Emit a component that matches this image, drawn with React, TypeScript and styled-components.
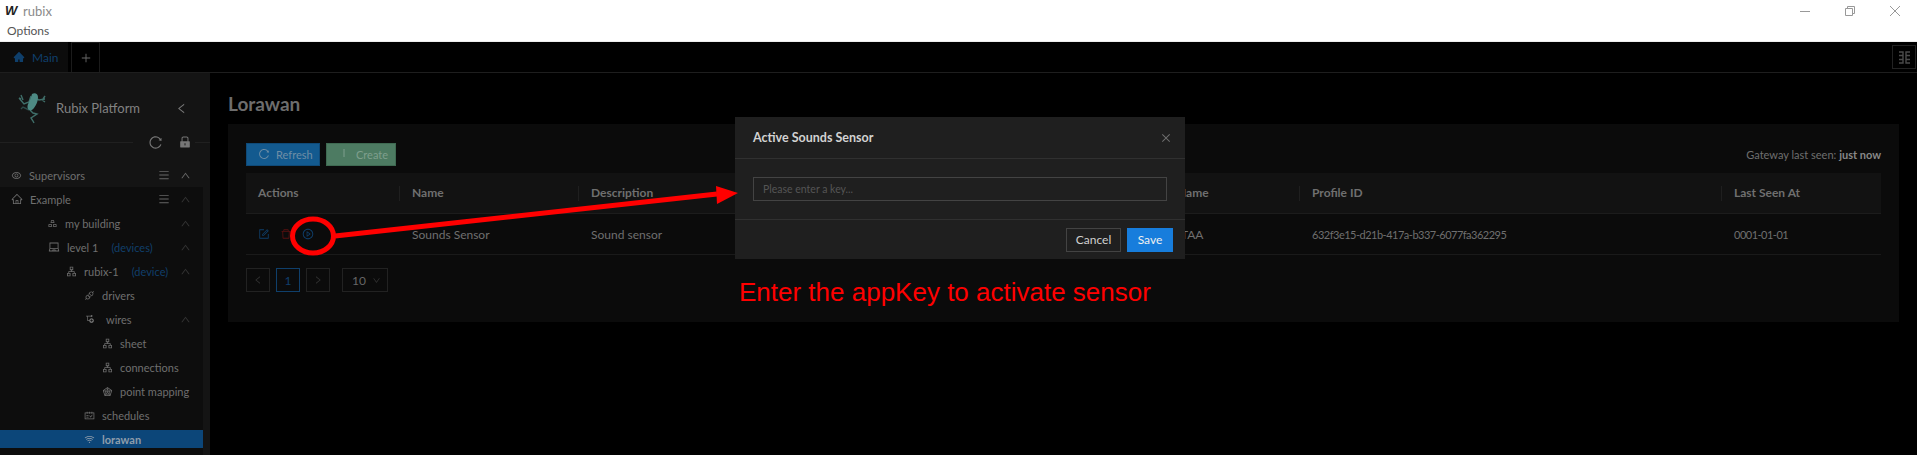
import styled, { createGlobalStyle } from 'styled-components';
import {
  AiFillHome,
  AiFillLock,
  AiOutlineApartment,
  AiOutlineApi,
  AiOutlineClose,
  AiOutlineDelete,
  AiOutlineDown,
  AiOutlineEye,
  AiOutlineForm,
  AiOutlineGold,
  AiOutlineHome,
  AiOutlineLaptop,
  AiOutlineLeft,
  AiOutlineMenu,
  AiOutlinePlayCircle,
  AiOutlinePlus,
  AiOutlineRadarChart,
  AiOutlineReload,
  AiOutlineRight,
  AiOutlineSchedule,
  AiOutlineSisternode,
  AiOutlineUp,
  AiOutlineWifi,
} from 'react-icons/ai';
import type { ReactNode } from 'react';

const Global = createGlobalStyle`
  html, body {
    margin: 0;
    padding: 0;
    height: 100%;
    overflow: hidden;
    background: #000;
    font-family: Lato, "Open Sans", sans-serif;
  }
  * { box-sizing: border-box; }
`;

const Page = styled.div`
  position: relative;
  width: 1917px;
  height: 455px;
  overflow: hidden;
  display: flex;
  flex-direction: column;
`;

const TitleBar = styled.div`
  height: 42px;
  flex: none;
  background: #fff;
  border-bottom: 1px solid #eeeeee;
  display: flex;
  flex-direction: column;
`;

const TitleRow = styled.div`
  height: 21px;
  display: flex;
  align-items: center;
  padding-left: 5px;
`;

const AppBadge = styled.span`
  width: 11px;
  font: italic 700 13px 'Liberation Sans', sans-serif;
  color: #222;
`;

const AppName = styled.span`
  margin-left: 7px;
  font-size: 13px;
  color: #8a8a8a;
`;

const WindowControls = styled.div`
  margin-left: auto;
  display: flex;
  gap: 35px;
  padding-right: 17px;
  align-items: center;
`;

const MenuRow = styled.div`
  height: 20px;
  padding-left: 7px;
  font-size: 12px;
  line-height: 20px;
  color: #555;
`;

const TabBar = styled.div`
  height: 31px;
  flex: none;
  display: flex;
  background: #000;
  border-bottom: 1px solid #1e1e1e;
`;

const MainTab = styled.div`
  width: 68px;
  display: flex;
  align-items: center;
  gap: 7px;
  padding-left: 13px;
  background: #0c0c0c;
  color: #0f3f6b;
  font-size: 12px;
`;

const PlusTab = styled.div`
  width: 29px;
  margin-left: 3px;
  display: flex;
  align-items: center;
  justify-content: center;
  border: 1px solid #1b1b1b;
  border-bottom: none;
  color: #6a6a6a;
  font-size: 12px;
`;

const LayoutButton = styled.div`
  margin: 3px 1px 3px auto;
  width: 24px;
  display: flex;
  align-items: center;
  justify-content: center;
  border: 1px solid #222;
`;

const Body = styled.div`
  flex: 1;
  display: flex;
  min-height: 0;
`;

const Sidebar = styled.aside`
  width: 210px;
  flex: none;
  background: #141414;
  display: flex;
  flex-direction: column;
`;

const Brand = styled.div`
  height: 58px;
  display: flex;
  align-items: center;
  padding: 12px 22px 0 18px;
  color: #828282;
  font-size: 13px;
`;

const BrandName = styled.span`
  margin-left: 10px;
  flex: 1;
`;

const ToolRow = styled.div`
  height: 24px;
  display: flex;
  align-items: center;
  gap: 15px;
  color: #777;
  margin: -1px 0 9px;
  padding-right: 18px;
`;

const ToolRule = styled.span`
  height: 1px;
  background: #202020;
  flex: 1;
`;

const RightRule = styled.span`
  width: 15px;
  height: 1px;
  margin: 0 -18px 0 -12px;
  background: #202020;
`;

const Tree = styled.div`
  flex: 1;
  width: 203px;
  display: flex;
  flex-direction: column;
  background: #0d0d0d;
`;

const TreeRow = styled.div<{ $indent: number; $selected?: boolean; $top?: boolean }>`
  height: ${(p) => (p.$selected ? 18 : 24)}px;
  margin: ${(p) => (p.$selected ? '3px 0' : '0')};
  flex: none;
  display: flex;
  align-items: center;
  gap: 7px;
  padding-left: ${(p) => p.$indent}px;
  padding-right: 12px;
  font-size: 11px;
  font-weight: ${(p) => (p.$selected ? 700 : 400)};
  color: ${(p) => (p.$selected ? '#8f9dab' : '#6f6f6f')};
  background: ${(p) => (p.$selected ? '#0c4679' : p.$top ? '#141414' : 'transparent')};
  & > svg { flex: none; }
`;

const TreeLabel = styled.span<{ $gap?: number }>`
  margin-left: ${(p) => p.$gap ?? 0}px;
  white-space: pre;
`;

const TreeTag = styled.span`
  margin-left: 6px;
  color: #103f6a;
`;

const RowTools = styled.span`
  margin-left: auto;
  width: 34px;
  display: flex;
  justify-content: flex-end;
  align-items: center;
  gap: 10px;
  color: #444;
`;

const Main = styled.main`
  flex: 1;
  min-width: 0;
  padding: 17px 18px 0;
  background: #000;
`;

const Heading = styled.h1`
  margin: 0;
  height: 34px;
  font-size: 19px;
  line-height: 27px;
  font-weight: 700;
  color: #6d6d6d;
`;

const Panel = styled.section`
  height: 198px;
  background: #0b0b0b;
  padding: 19px 18px 0;
`;

const Toolbar = styled.div`
  display: flex;
  align-items: center;
  gap: 6px;
  height: 22px;
  margin-bottom: 8px;
`;

const ActionButton = styled.div<{ $bg: string; $border: string; $color: string; $width: number }>`
  width: ${(p) => p.$width}px;
  height: 23px;
  display: flex;
  align-items: center;
  gap: 6px;
  padding-left: 11px;
  font-size: 11px;
  background: ${(p) => p.$bg};
  border: 1px solid ${(p) => p.$border};
  color: ${(p) => p.$color};
`;

const LastSeen = styled.div`
  margin-left: auto;
  font-size: 11px;
  color: #6f6f6f;
  & b { color: #888; }
`;

const Grid = styled.div`
  display: grid;
  grid-template-columns: 154px 179px 586px 135px 422px 159px;
`;

const HeadCell = styled.div<{ $rule?: boolean }>`
  position: relative;
  height: 41px;
  display: flex;
  align-items: center;
  padding: 0 0 2px 12px;
  background: #121212;
  border-bottom: 1px solid #1c1c1c;
  font-size: 12px;
  font-weight: 700;
  color: #6f6f6f;
  &::before {
    content: ${(p) => (p.$rule ? '""' : 'none')};
    position: absolute;
    left: -1px;
    top: 13px;
    height: 15px;
    width: 1px;
    background: #1f1f1f;
  }
`;

const Cell = styled.div<{ $compact?: boolean; $inset?: number }>`
  height: 41px;
  display: flex;
  align-items: center;
  gap: 10px;
  padding-left: ${(p) => 12 + (p.$inset ?? 0)}px;
  border-bottom: 1px solid #1a1a1a;
  font-size: ${(p) => (p.$compact ? 11 : 12)}px;
  letter-spacing: ${(p) => (p.$compact ? '-0.5px' : 'normal')};
  color: #6f6f6f;
`;

const Pager = styled.div`
  display: flex;
  margin-top: 13px;
  gap: 6px;
`;

const PageBox = styled.div<{ $active?: boolean }>`
  width: 24px;
  height: 24px;
  display: flex;
  align-items: center;
  justify-content: center;
  border: 1px solid ${(p) => (p.$active ? '#0f3f6b' : '#222')};
  color: ${(p) => (p.$active ? '#0f3f6b' : '#333')};
  font-size: 12px;
`;

const SizeSelect = styled.div`
  width: 46px;
  height: 24px;
  margin-left: 6px;
  display: flex;
  align-items: center;
  gap: 6px;
  padding-left: 9px;
  border: 1px solid #222;
  color: #666;
  font-size: 12px;
  & svg { color: #333; }
`;

const Modal = styled.div`
  position: absolute;
  left: 735px;
  top: 117px;
  width: 450px;
  height: 142px;
  background: #1f1f1f;
  display: flex;
  flex-direction: column;
`;

const ModalHead = styled.div`
  height: 42px;
  flex: none;
  display: flex;
  align-items: center;
  justify-content: space-between;
  padding: 0 13px 0 18px;
  border-bottom: 1px solid #303030;
  font-size: 12.5px;
  font-weight: 700;
  color: #d2d2d2;
  & svg { color: #6e6e6e; }
`;

const ModalBody = styled.div`
  height: 61px;
  flex: none;
  padding: 18px 18px 0;
  border-bottom: 1px solid #303030;
`;

const KeyInput = styled.div`
  height: 24px;
  display: flex;
  align-items: center;
  padding-left: 9px;
  border: 1px solid #434343;
  font-size: 10.5px;
  color: #555;
`;

const ModalFoot = styled.div`
  flex: 1;
  display: flex;
  justify-content: flex-end;
  align-items: center;
  gap: 6px;
  padding: 0 12px 0 0;
`;

const FootButton = styled.div<{ $primary?: boolean }>`
  height: 24px;
  width: ${(p) => (p.$primary ? 46 : 55)}px;
  display: flex;
  align-items: center;
  justify-content: center;
  font-size: 12px;
  color: ${(p) => (p.$primary ? '#f0f0f0' : '#d0d0d0')};
  background: ${(p) => (p.$primary ? '#177ddc' : 'transparent')};
  border: 1px solid ${(p) => (p.$primary ? '#177ddc' : '#434343')};
`;

const Markup = styled.svg`
  position: absolute;
  left: 0;
  top: 0;
`;

const Note = styled.div`
  position: absolute;
  left: 739px;
  top: 277px;
  font: 26px/30px 'Liberation Sans', Arial, sans-serif;
  color: #ff0000;
  white-space: nowrap;
`;

const Frog = () => (
  <svg width="28" height="32" viewBox="0 0 28 32" fill="none" stroke="#3f6e69" strokeWidth="1.4">
    <path d="M13 4l-2 6-5 2-5-6M1 6l2 1M3 3l2 5" />
    <path d="M17 6l4 2 6-1M27 4l-2 3M27 10l-3-2" />
    <path d="M12 18l3 3 4 1-6 4 2 3 1 2" />
    <path d="M11 18l-6-3-2 2" stroke="#2c4a48" />
    <path d="M14 2c3-2 6 0 6 3 0 5-2 8-4 11-2 3-5 3-6 1-2-4 2-7 4-15z" fill="#4d8a84" stroke="none" />
  </svg>
);

const LayoutGlyph = () => (
  <svg width="13" height="13" viewBox="0 0 13 13" fill="none" stroke="#4b4b4b" strokeWidth="1.4">
    <path d="M1 1h4v11H1M1 4.5h4M1 8.5h4M12 1H8v11h4M8 4.5h4M8 8.5h4" />
  </svg>
);

interface NodeProps {
  indent: number;
  icon: ReactNode;
  label: string;
  tag?: string;
  menu?: boolean;
  open?: boolean;
  top?: boolean;
  selected?: boolean;
  gap?: number;
}

const TreeNode = ({ indent, icon, label, tag, menu, open, top, selected, gap }: NodeProps) => (
  <TreeRow $indent={indent} $top={top} $selected={selected}>
    {icon}
    <TreeLabel $gap={gap}>{label}</TreeLabel>
    {tag && <TreeTag>{tag}</TreeTag>}
    {open && (
      <RowTools>
        {menu && <AiOutlineMenu size={12} color="#666" />}
        <AiOutlineUp size={11} color={top ? '#666' : '#333'} />
      </RowTools>
    )}
  </TreeRow>
);

export default function App() {
  return (
    <Page>
      <Global />
      <TitleBar>
        <TitleRow>
          <AppBadge>W</AppBadge>
          <AppName>rubix</AppName>
          <WindowControls>
            <svg width="10" height="10" viewBox="0 0 10 10" stroke="#999"><path d="M0 5.5h10" /></svg>
            <svg width="10" height="10" viewBox="0 0 10 10" fill="none" stroke="#999"><path d="M.5 2.5h7v7h-7zM2.5 2.5v-2h7v7h-2" /></svg>
            <svg width="10" height="10" viewBox="0 0 10 10" stroke="#999"><path d="M0 0l10 10M10 0L0 10" /></svg>
          </WindowControls>
        </TitleRow>
        <MenuRow>Options</MenuRow>
      </TitleBar>
      <TabBar>
        <MainTab><AiFillHome size={12} />Main</MainTab>
        <PlusTab><AiOutlinePlus size={12} /></PlusTab>
        <LayoutButton><LayoutGlyph /></LayoutButton>
      </TabBar>
      <Body>
        <Sidebar>
          <Brand>
            <Frog />
            <BrandName>Rubix Platform</BrandName>
            <AiOutlineLeft size={13} color="#777" />
          </Brand>
          <ToolRow>
            <ToolRule />
            <AiOutlineReload size={15} />
            <AiFillLock size={14} />
            <RightRule />
          </ToolRow>
          <Tree>
            <TreeNode top indent={11} icon={<AiOutlineEye size={11} />} label="Supervisors" menu open />
            <TreeNode indent={11} icon={<AiOutlineHome size={12} />} label="Example" menu open />
            <TreeNode indent={47} icon={<AiOutlineGold size={11} />} label="my building" open />
            <TreeNode indent={48} icon={<AiOutlineLaptop size={12} />} label="level 1" tag="(devices)" open />
            <TreeNode indent={66} icon={<AiOutlineApartment size={11} />} label="rubix-1" tag="(device)" open />
            <TreeNode indent={84} icon={<AiOutlineApi size={11} />} label="drivers" />
            <TreeNode indent={85} icon={<AiOutlineSisternode size={10} />} label="wires" gap={4} open />
            <TreeNode indent={102} icon={<AiOutlineApartment size={11} />} label="sheet" />
            <TreeNode indent={102} icon={<AiOutlineApartment size={11} />} label="connections" />
            <TreeNode indent={102} icon={<AiOutlineRadarChart size={11} />} label="point mapping" />
            <TreeNode indent={84} icon={<AiOutlineSchedule size={11} />} label="schedules" />
            <TreeNode selected indent={84} icon={<AiOutlineWifi size={11} />} label="lorawan" />
          </Tree>
        </Sidebar>
        <Main>
          <Heading>Lorawan</Heading>
          <Panel>
            <Toolbar>
              <ActionButton $bg="#135a8f" $border="#0f4a78" $color="#6f8ea5" $width={74}>
                <AiOutlineReload size={12} />Refresh
              </ActionButton>
              <ActionButton $bg="#4d7b62" $border="#3f6a52" $color="#7f9f8d" $width={70}>
                <svg width="12" height="12" viewBox="0 0 12 12" stroke="#7f9f8d"><path d="M6 1v8" /></svg>Create
              </ActionButton>
              <LastSeen>Gateway last seen: <b>just now</b></LastSeen>
            </Toolbar>
            <Grid>
              <HeadCell>Actions</HeadCell>
              <HeadCell $rule>Name</HeadCell>
              <HeadCell $rule>Description</HeadCell>
              <HeadCell $rule>Name</HeadCell>
              <HeadCell $rule>Profile ID</HeadCell>
              <HeadCell $rule>Last Seen At</HeadCell>
              <Cell>
                <AiOutlineForm size={12} color="#0f3f6b" />
                <AiOutlineDelete size={12} color="#5a1010" />
                <AiOutlinePlayCircle size={12} color="#0f3f6b" />
              </Cell>
              <Cell>Sounds Sensor</Cell>
              <Cell>Sound sensor</Cell>
              <Cell $inset={4}>TAA</Cell>
              <Cell $compact>632f3e15-d21b-417a-b337-6077fa362295</Cell>
              <Cell $compact>0001-01-01</Cell>
            </Grid>
            <Pager>
              <PageBox><AiOutlineLeft size={10} /></PageBox>
              <PageBox $active>1</PageBox>
              <PageBox><AiOutlineRight size={10} /></PageBox>
              <SizeSelect>10<AiOutlineDown size={9} /></SizeSelect>
            </Pager>
          </Panel>
        </Main>
      </Body>
      <Modal>
        <ModalHead>
          Active Sounds Sensor
          <AiOutlineClose size={12} />
        </ModalHead>
        <ModalBody>
          <KeyInput>Please enter a key...</KeyInput>
        </ModalBody>
        <ModalFoot>
          <FootButton>Cancel</FootButton>
          <FootButton $primary>Save</FootButton>
        </ModalFoot>
      </Modal>
      <Markup width="1917" height="455" viewBox="0 0 1917 455">
        <ellipse cx="313" cy="236" rx="20.5" ry="17" fill="none" stroke="#ff0000" strokeWidth="5" />
        <path d="M335 236L717 194" stroke="#ff0000" strokeWidth="5" />
        <path d="M716 186L738 193L717 204z" fill="#ff0000" />
      </Markup>
      <Note>Enter the appKey to activate sensor</Note>
    </Page>
  );
}
